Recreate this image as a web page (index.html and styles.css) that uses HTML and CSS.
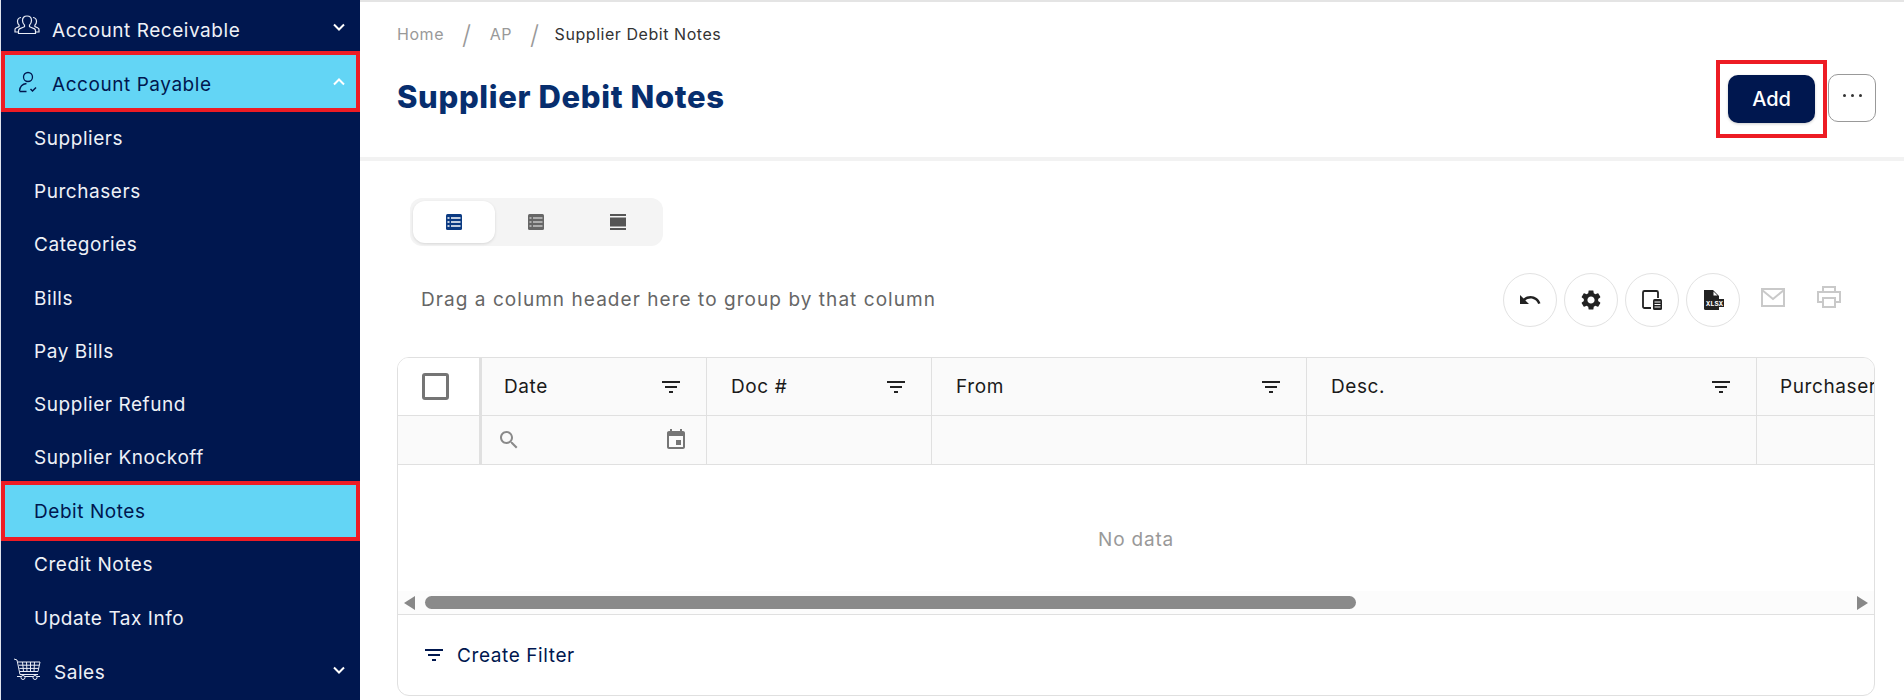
FILE: index.html
```html
<!DOCTYPE html>
<html lang="en">
<head>
  <meta charset="UTF-8">
  <meta name="viewport" content="width=device-width, initial-scale=1.0">
  <title>Supplier Debit Notes</title>
  <link rel="stylesheet" href="styles.css">
</head>
<body>
  <div class="app">
    <nav class="sidebar">
      <div class="nav-item nav-first">
        <svg class="nav-icon" width="26" height="24" viewBox="0 0 26 24" fill="none" stroke="#e8ecf5" stroke-width="1.2"><path d="M13 2c3 0 4.5 2 4.5 4.5 0 2-1 3.6-2 4.6v1.6l5 2.2c.8.4 1 1 1 2.1v2.5H4.500v-2.500c0-1.100.2-1.700 1-2.100l5-2.200v-1.600c-1-1-2-2.600-2-4.600C8.500 4 10 2 13 2z"/><path d="M7 3.500C4.500 3.800 3.500 5.500 3.500 7.500c0 1.600.8 2.900 1.600 3.700v1.300L2 14c-.7.3-1 .9-1 1.700V18h3.500"/><path d="M19 3.500c2.500.3 3.500 2 3.500 4 0 1.600-.8 2.900-1.600 3.700v1.300L24 14c.7.3 1 .9 1 1.700V18h-3.500"/></svg>
        <span class="nav-label">Account Receivable</span>
        <svg class="chevron" width="14" height="9" viewBox="0 0 14 9" fill="none" stroke="#fff" stroke-width="2"><path d="M2 1.500l5 5 5-5"/></svg>
      </div>
      <div class="nav-item nav-open marked">
        <svg class="nav-icon" width="20" height="22" viewBox="0 0 20 22" fill="none" stroke="#00174f" stroke-width="1.3"><circle cx="10" cy="6" r="4.500"/><path d="M1.500 20c.3-4 3-7 7-7.500M1.500 20.500h7"/><path d="M12.500 18l2 2 3.500-3.500" stroke-width="1.500"/></svg>
        <span class="nav-label">Account Payable</span>
        <svg class="chevron" width="14" height="9" viewBox="0 0 14 9" fill="none" stroke="#fff" stroke-width="2"><path d="M2 7.500l5-5 5 5"/></svg>
      </div>
      <a class="nav-sub">Suppliers</a>
      <a class="nav-sub">Purchasers</a>
      <a class="nav-sub">Categories</a>
      <a class="nav-sub">Bills</a>
      <a class="nav-sub">Pay Bills</a>
      <a class="nav-sub">Supplier Refund</a>
      <a class="nav-sub">Supplier Knockoff</a>
      <a class="nav-sub nav-current marked">Debit Notes</a>
      <a class="nav-sub">Credit Notes</a>
      <a class="nav-sub">Update Tax Info</a>
      <div class="nav-item nav-last">
        <svg class="nav-icon cart" width="28" height="24" viewBox="0 0 28 24" fill="none" stroke="#e8ecf5" stroke-width="1"><path d="M1 2l3 1 3 14.500h18"/><path d="M5 5h22l-2 9.500H7"/><path d="M9.500 5l1 9.500M13.500 5l.5 9.500M17.500 5v9.500M21.500 5l-.5 9.500M5.700 8.200h20.700M6.300 11.400h19.400"/><circle cx="10" cy="20.500" r="2"/><circle cx="22" cy="20.500" r="2"/><path d="M4 19.500h4M12 19.500h8M24 19.500h3"/></svg>
        <span class="nav-label">Sales</span>
        <svg class="chevron" width="14" height="9" viewBox="0 0 14 9" fill="none" stroke="#fff" stroke-width="2"><path d="M2 1.500l5 5 5-5"/></svg>
      </div>
    </nav>

    <main class="main">
      <header class="page-head">
        <div class="crumbs">
          <span class="crumb">Home</span>
          <span class="crumb-sep">/</span>
          <span class="crumb">AP</span>
          <span class="crumb-sep">/</span>
          <span class="crumb-last">Supplier Debit Notes</span>
        </div>
        <div class="title-row">
          <h1>Supplier Debit Notes</h1>
          <div class="head-actions">
            <div class="add-mark"><button class="btn-add">Add</button></div>
            <button class="btn-more"><span></span><span></span><span></span></button>
          </div>
        </div>
      </header>

      <section class="content">
        <div class="density">
          <div class="density-btn active">
            <svg width="16" height="16" viewBox="0 0 16 16"><rect width="16" height="16" rx="1.500" fill="#0b3a82"/><path d="M1.500 4h2M5 4h9.500M1.500 8h2M5 8h9.500M1.500 12h2M5 12h9.500" stroke="#fff" stroke-width="1.300"/></svg>
          </div>
          <div class="density-btn">
            <svg width="16" height="16" viewBox="0 0 16 16"><rect width="16" height="16" rx="1.500" fill="#666"/><path d="M1.500 4h2M5 4h9.500M1.500 8h2M5 8h9.500M1.500 12h2M5 12h9.500" stroke="#f4f4f4" stroke-width="1"/></svg>
          </div>
          <div class="density-btn">
            <svg width="16" height="16" viewBox="0 0 16 16"><path d="M0 0h16v2H0zM0 3.500h16v9H0zM0 14h16v2H0z" fill="#555"/></svg>
          </div>
        </div>

        <div class="toolbar">
          <span class="group-hint">Drag a column header here to group by that column</span>
          <div class="tools">
            <button class="tool"><svg width="24" height="24" viewBox="0 0 24 24" fill="#222"><path d="M12.500 8c-2.650 0-5.050.99-6.900 2.600L2 7v9h9l-3.620-3.620c1.390-1.160 3.160-1.880 5.120-1.880 3.540 0 6.550 2.310 7.600 5.500l2.370-.78C21.080 11.030 17.150 8 12.500 8z"/></svg></button>
            <button class="tool"><svg width="24" height="24" viewBox="0 0 24 24" fill="#222"><path d="M19.140 12.940c.04-.3.06-.61.06-.94 0-.32-.02-.64-.07-.94l2.030-1.580c.18-.14.23-.41.12-.61l-1.920-3.320c-.12-.22-.37-.29-.59-.22l-2.390.96c-.5-.38-1.030-.7-1.620-.94l-.36-2.540c-.04-.24-.24-.41-.48-.41h-3.840c-.24 0-.43.17-.47.41l-.36 2.540c-.59.24-1.130.57-1.620.94l-2.390-.96c-.22-.08-.47 0-.59.22L2.740 8.870c-.12.21-.08.47.12.61l2.030 1.580c-.05.3-.09.63-.09.94s.02.64.07.94l-2.030 1.580c-.18.14-.23.41-.12.61l1.920 3.320c.12.22.37.29.59.22l2.390-.96c.5.38 1.030.7 1.620.94l.36 2.540c.05.24.24.41.48.41h3.840c.24 0 .44-.17.47-.41l.36-2.540c.59-.24 1.130-.56 1.620-.94l2.390.96c.22.08.47 0 .59-.22l1.920-3.320c.12-.22.07-.47-.12-.61l-2.010-1.580zM12 15.600c-1.980 0-3.600-1.620-3.600-3.600s1.620-3.600 3.600-3.600 3.600 1.620 3.600 3.600-1.620 3.600-3.600 3.600z"/></svg></button>
            <button class="tool"><svg width="22" height="22" viewBox="0 0 22 22"><path d="M10 19H3.500A1.500 1.500 0 0 1 2 17.500v-14A1.500 1.500 0 0 1 3.500 2h12A1.500 1.500 0 0 1 17 3.500V9" fill="none" stroke="#222" stroke-width="1.800"/><rect x="12" y="10" width="9" height="11" rx="1.500" fill="#222"/><path d="M13.500 13h6M13.500 15.500h6M13.500 18h6" stroke="#fff" stroke-width="1"/></svg></button>
            <button class="tool"><svg width="24" height="24" viewBox="0 0 24 24"><path d="M3 2h9l6 6v14H4.500A1.500 1.500 0 0 1 3 20.500z" fill="#222"/><path d="M12.500 3.500l4 4h-4z" fill="#fff"/><rect x="4" y="11" width="19" height="8" fill="#222"/><text x="13.500" y="17.500" class="xlsx">XLSX</text></svg></button>
            <span class="tool-flat"><svg width="24" height="19" viewBox="0 0 24 19" fill="none" stroke="#c9c9c9" stroke-width="2"><rect x="1" y="1" width="22" height="17"/><path d="M1 2l11 9 11-9"/></svg></span>
            <span class="tool-flat"><svg width="24" height="22" viewBox="0 0 24 22" fill="none" stroke="#c9c9c9" stroke-width="2"><path d="M6 6V1h12v5M6 16H1V6h22v10h-5"/><rect x="6" y="12" width="12" height="9"/></svg></span>
          </div>
        </div>

        <div class="grid-card">
          <div class="grid-head">
            <div class="cell cell-check"><span class="checkbox"></span></div>
            <div class="cell col-head col-date"><span>Date</span><svg class="filter" width="24" height="24" viewBox="0 0 24 24"><path d="M10 18h4v-2h-4v2zM3 6v2h18V6H3zm3 7h12v-2H6v2z"/></svg></div>
            <div class="cell col-head"><span>Doc #</span><svg class="filter" width="24" height="24" viewBox="0 0 24 24"><path d="M10 18h4v-2h-4v2zM3 6v2h18V6H3zm3 7h12v-2H6v2z"/></svg></div>
            <div class="cell col-head"><span>From</span><svg class="filter" width="24" height="24" viewBox="0 0 24 24"><path d="M10 18h4v-2h-4v2zM3 6v2h18V6H3zm3 7h12v-2H6v2z"/></svg></div>
            <div class="cell col-head"><span>Desc.</span><svg class="filter" width="24" height="24" viewBox="0 0 24 24"><path d="M10 18h4v-2h-4v2zM3 6v2h18V6H3zm3 7h12v-2H6v2z"/></svg></div>
            <div class="cell col-head col-last"><span>Purchaser</span></div>
          </div>
          <div class="grid-filter">
            <div class="cell cell-check"></div>
            <div class="cell date-filter">
              <svg width="24" height="24" viewBox="0 0 24 24" fill="#8a8a8a"><path d="M15.500 14h-.79l-.28-.27C15.410 12.590 16 11.110 16 9.500 16 5.910 13.090 3 9.500 3S3 5.910 3 9.500 5.910 16 9.500 16c1.610 0 3.090-.59 4.230-1.570l.27.28v.79l5 4.990L20.490 19l-4.990-5zm-6 0C7.010 14 5 11.990 5 9.500S7.010 5 9.500 5 14 7.010 14 9.500 11.990 14 9.500 14z"/></svg>
              <svg width="24" height="24" viewBox="0 0 24 24" fill="#757575"><path d="M17 12h-5v5h5v-5zM16 1v2H8V1H6v2H5c-1.110 0-1.990.9-1.990 2L3 19c0 1.100.89 2 2 2h14c1.100 0 2-.9 2-2V5c0-1.100-.9-2-2-2h-1V1h-2zm3 18H5V8h14v11z"/></svg>
            </div>
            <div class="cell"></div>
            <div class="cell"></div>
            <div class="cell"></div>
            <div class="cell col-last"></div>
          </div>
          <div class="grid-empty">No data</div>
          <div class="grid-scroll">
            <span class="arrow-left"></span>
            <div class="scroll-track"><div class="scroll-thumb"></div></div>
            <span class="arrow-right"></span>
          </div>
          <div class="grid-foot">
            <svg width="24" height="24" viewBox="0 0 24 24" fill="#00174f"><path d="M10 18h4v-2h-4v2zM3 6v2h18V6H3zm3 7h12v-2H6v2z"/></svg>
            <span>Create Filter</span>
          </div>
        </div>
      </section>
    </main>
  </div>
</body>
</html>
```

FILE: styles.css
```css
/* Page layout */
* {
  box-sizing: border-box;
}

html, body {
  margin: 0;
  height: 700px;
  overflow: hidden;
  background: #fff;
  font-family: "Inter", "Liberation Sans", sans-serif;
}

.app {
  display: flex;
  height: 700px;
}

/* Sidebar */
.sidebar {
  width: 360px;
  flex-shrink: 0;
  height: 700px;
  overflow: hidden;
  background: #00174f;
  border-left: 1px solid #dfe3ec;
  color: #eef1f7;
  font-size: 19px;
  letter-spacing: 0.55px;
}

.nav-item {
  display: flex;
  align-items: center;
  height: 54px;
  padding: 0 14px 0 13px;
}

.nav-first {
  height: 51px;
  padding-top: 9px;
}

.nav-last {
  padding-top: 2px;
}

.nav-icon {
  flex-shrink: 0;
  margin-right: 12px;
  margin-top: -8px;
}

.nav-open .nav-icon {
  margin: -4px 14px 0 4px;
}

.cart {
  margin-left: -1px;
  margin-right: 13px;
}

.nav-label {
  flex: 1;
}

.chevron {
  margin-top: -5px;
}

.nav-open {
  background: #63d5f5;
  color: #00174f;
  height: 61px;
}

.nav-sub {
  display: flex;
  align-items: center;
  height: 53.2px;
  padding-left: 33px;
}

.nav-current {
  background: #63d5f5;
  color: #00174f;
  height: 60px;
  margin: -3px 0 -3px;
  position: relative;
}

.marked {
  border: 4px solid #ed1c24;
}

.nav-open.marked {
  padding-left: 9px;
  padding-right: 10px;
  padding-top: 5px;
}

.nav-current.marked {
  padding-left: 29px;
}

/* Header */
.main {
  flex: 1;
  min-width: 0;
  border-top: 2px solid #e4e4e4;
}

.page-head {
  height: 159px;
  padding: 0 28px 0 37px;
  border-bottom: 4px solid #f2f2f2;
}

.crumbs {
  display: flex;
  align-items: center;
  height: 64px;
  font-size: 16px;
  letter-spacing: 0.55px;
  color: #999;
}

.crumb-sep {
  margin: 0 18px;
  font-size: 26px;
  font-weight: 300;
}

.crumb-last {
  margin-left: -3px;
  color: #333;
}

.title-row {
  display: flex;
  align-items: flex-start;
  justify-content: space-between;
}

h1 {
  margin: 9px 0 0;
  font-size: 31px;
  line-height: 44px;
  font-weight: 800;
  letter-spacing: 0.65px;
  color: #072e6e;
}

.head-actions {
  display: flex;
  margin-top: -6px;
}

.add-mark {
  display: flex;
  align-items: center;
  justify-content: center;
  width: 111px;
  height: 78px;
  border: 4px solid #ed1c24;
}

.btn-add {
  width: 87px;
  height: 48px;
  border: none;
  border-radius: 10px;
  background: #00174f;
  color: #fff;
  font: 500 20px "Inter", "Liberation Sans", sans-serif;
  box-shadow: 0 1px 3px rgba(0, 0, 0, 0.2);
}

.btn-more {
  display: flex;
  align-items: center;
  justify-content: center;
  gap: 5px;
  width: 48px;
  height: 48px;
  margin: 14px 0 0 1px;
  padding: 0 0 6px;
  border: 1px solid #999;
  border-radius: 10px;
  background: #fff;
}

.btn-more span {
  width: 3px;
  height: 3px;
  border-radius: 50%;
  background: #333;
}

/* Content */
.content {
  padding: 37px 29px 0 37px;
}

.density {
  display: flex;
  width: 253px;
  height: 48px;
  margin-left: 13px;
  padding: 3px;
  border-radius: 12px;
  background: #f4f4f4;
}

.density-btn {
  display: flex;
  align-items: center;
  justify-content: center;
  width: 82px;
  height: 42px;
  border-radius: 12px;
}

.density-btn.active {
  background: #fff;
  box-shadow: 0 1px 3px rgba(0, 0, 0, 0.12);
}

.toolbar {
  display: flex;
  align-items: center;
  justify-content: space-between;
  height: 54px;
  margin: 27px 0 30px;
  padding: 0 34px 0 24px;
}

.group-hint {
  margin-top: -2px;
  font-size: 19px;
  letter-spacing: 1.05px;
  color: #666;
}

.tools {
  display: flex;
  align-items: center;
  gap: 7.300px;
}

.tool {
  display: flex;
  align-items: center;
  justify-content: center;
  width: 54px;
  height: 54px;
  padding: 0;
  border: 1px solid #e2e2e2;
  border-radius: 50%;
  background: #fff;
}

.tool-flat {
  display: flex;
  justify-content: center;
  width: 24px;
  margin: -6px 0 0 13px;
}

.tool-flat + .tool-flat {
  margin-left: 25px;
}

.xlsx {
  font: 700 7px "Liberation Mono", monospace;
  text-anchor: middle;
  fill: #fff;
}

/* Grid */
.grid-card {
  width: 1478px;
  height: 339px;
  border: 1px solid #e0e0e0;
  border-radius: 12px;
  overflow: hidden;
}

.grid-head,
.grid-filter {
  display: grid;
  grid-template-columns: 84px 225px 225px 375px 450px 1fr;
  background: #fafafa;
  border-bottom: 1px solid #e0e0e0;
}

.grid-head {
  height: 58px;
}

.grid-filter {
  height: 49px;
}

.cell {
  display: flex;
  align-items: center;
  border-right: 1px solid #e0e0e0;
}

.cell-check {
  padding-left: 24px;
  background: #fafafa;
  border-right: 3px solid #e0e0e0;
}

.grid-head .cell-check {
  background: #fff;
}

.col-last {
  border-right: none;
}

.checkbox {
  width: 27px;
  height: 27px;
  border: 3px solid #757575;
  border-radius: 3px;
  background: #fff;
}

.col-head {
  justify-content: space-between;
  padding: 0 23px 0 24px;
  font-size: 19px;
  letter-spacing: 0.6px;
  color: #1a1a1a;
  white-space: nowrap;
  overflow: hidden;
}

.col-date {
  padding-left: 22px;
}

.col-last {
  padding-left: 23px;
}

.filter {
  flex-shrink: 0;
  fill: #222;
}

.date-filter {
  justify-content: space-between;
  padding: 0 18px 0 15px;
}

.grid-empty {
  display: flex;
  align-items: center;
  justify-content: center;
  height: 126px;
  padding-top: 22px;
  font-size: 19px;
  letter-spacing: 0.8px;
  color: #999;
}

.grid-scroll {
  display: flex;
  align-items: center;
  height: 24px;
  padding: 0 6px;
  background: #fcfcfc;
  border-bottom: 1px solid #e0e0e0;
}

.arrow-left,
.arrow-right {
  width: 0;
  height: 0;
  border-top: 7px solid transparent;
  border-bottom: 7px solid transparent;
}

.arrow-left {
  border-right: 11px solid #888;
}

.arrow-right {
  border-left: 11px solid #888;
}

.scroll-track {
  flex: 1;
  padding: 0 10px;
}

.scroll-thumb {
  width: 931px;
  height: 13px;
  border-radius: 7px;
  background: #8a8a8a;
}

.grid-foot {
  display: flex;
  align-items: center;
  gap: 11px;
  height: 80px;
  padding-left: 24px;
  font-size: 19px;
  letter-spacing: 0.6px;
  color: #00174f;
}
```
